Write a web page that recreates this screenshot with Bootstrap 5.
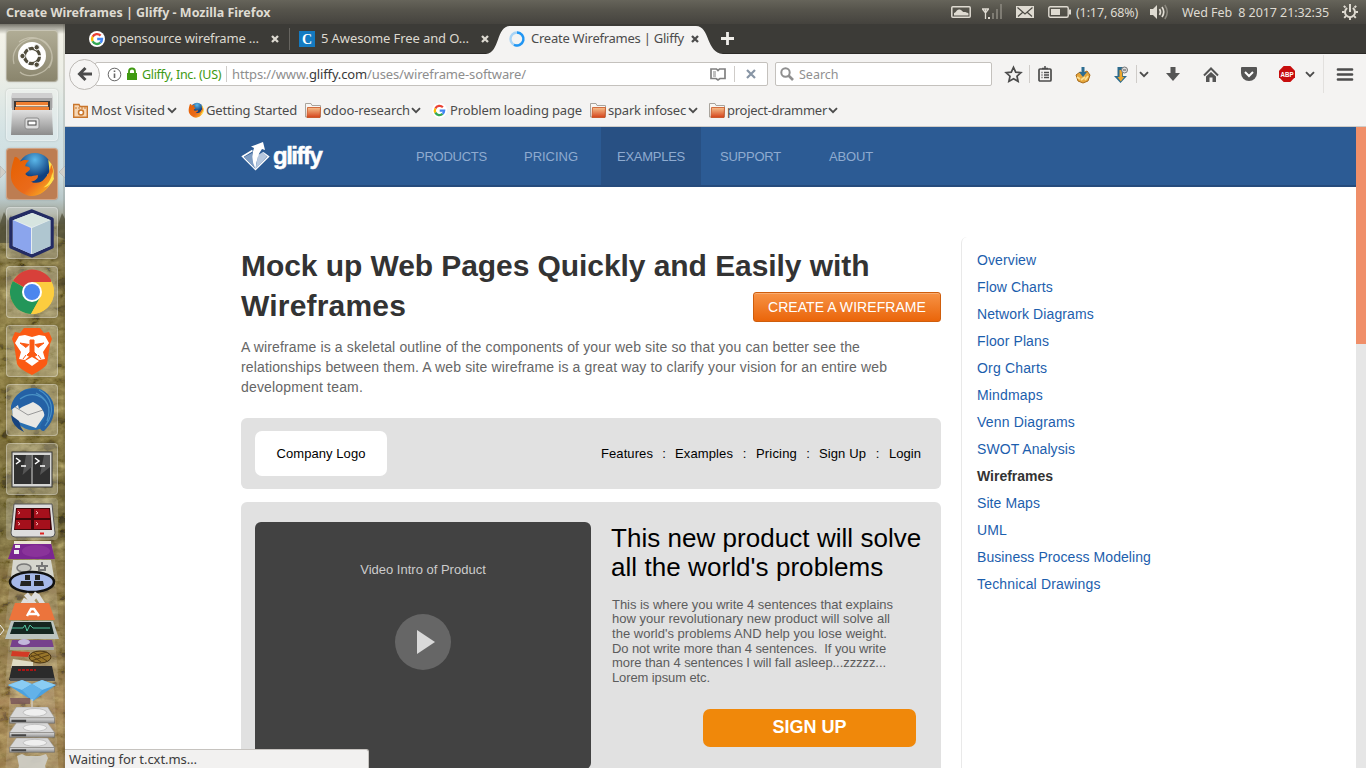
<!DOCTYPE html>
<html lang="en">
<head>
<meta charset="utf-8">
<title>Create Wireframes | Gliffy</title>
<link href="https://cdn.jsdelivr.net/npm/bootstrap@5.3.0/dist/css/bootstrap.min.css" rel="stylesheet">
<style>
html,body{height:768px;overflow:hidden}
body{font-family:"Noto Sans","Open Sans",sans-serif;font-size:13px;line-height:1.2;color:#3c3c3c;background:#fff}
svg{display:block;flex:none;overflow:visible}
.tx{white-space:pre;flex:none;display:block}
.site,.site .tx{font-family:"Liberation Sans",Arial,sans-serif}
.panel{height:24px;background:linear-gradient(#66645a,#56544c 40%,#45433e);color:#dfdbd2;flex:none}
.launcher{width:65px;background:linear-gradient(#77756c 0,#f3f2e8 10px,#eceee6 50px,#d3e2e4 110px,#cfdee0 150px,#b9c8c9 175px,#a3a79a 190px,#6d6848 203px,#77693c 240px,#8a7a40 330px,#7c6d38 400px,#6b6137 500px,#8a7344 560px,#8b7548 620px,#a58356 680px,#97794a 744px);overflow:hidden}
.tile{width:52px;height:52px;border-radius:4px;background:rgba(255,255,255,.22);box-shadow:inset 0 0 0 1px rgba(255,255,255,.3),0 0 2px rgba(0,0,0,.2);margin-bottom:7px;flex:none}
.tabs-strip{height:30px;background:#3c3b37;border-bottom:1px solid #2b2a27;color:#dcd9d0}
.tab-sep{width:1px;height:22px;background:#66645f}
.toolbar{height:40px;background:#f4f3f2}
.field{height:24px;background:#fff;border:1px solid #c4c1bd;border-radius:2px}
.field .tx{padding-top:1px}
.backbtn{width:31px;height:31px;border:1px solid #bdbab6;border-radius:50%;background:#f6f5f4;z-index:2}
.marks{height:33px;background:#f4f3f2;border-bottom:1px solid #cfccc8;color:#4c4c4c}
.marks .tx{padding-top:1px}
.vsep{width:1px;background:#cfccc9;flex:none}
.w30{width:30px}.w46{width:46px}.w13{width:13px}
.gheader{height:60px;background:#2c5b94;border-bottom:2px solid #264b7c}
.gheader .item{color:#8fabd0;font-size:13px;height:58px;padding-top:2px}
.gheader .on{background:#285083;width:100px}
.logo-word{font-weight:700;font-size:24px;color:#fff;line-height:28px;-webkit-text-stroke:.5px #fff}
.page-h{font-size:30px;font-weight:700;line-height:40px;color:#333;margin:59px 0 0}
.lede{font-size:14px;line-height:20px;color:#666;margin:11px 0 0}
.cta{width:188px;height:30px;border:1px solid #cf5e0d;border-radius:3px;background:linear-gradient(#f79346,#ea650a);box-shadow:inset 0 1px 0 rgba(255,255,255,.25);color:#fff;font-size:14px;font-weight:400;line-height:1;margin-top:6px}
.content{width:700px;margin-left:176px}
.wbox{background:#e1e1e1;border-radius:6px}
.wbox-a{height:71px;margin-top:21px;padding:13px 20px 13px 14px;font-size:13px;color:#000}
.clogo{width:132px;height:45px;background:#fff;border-radius:7px}
.wbox-b{height:290px;margin-top:12.5px;padding:20px 0 0 14px}
.video{width:336px;height:247px;background:#424242;border-radius:6px;color:#ccc;font-size:13px}
.play{width:56px;height:56px;border-radius:50%;background:#666;margin-top:37px}
.pitch{font-size:26px;line-height:29.5px;color:#000;margin-top:2px}
.pitch2{font-size:13px;line-height:14.7px;color:#5c5c5c;margin-top:15px;padding-left:1px}
.signup{width:213px;height:38px;border-radius:7px;background:#f0880a;color:#fff;font-size:18px;font-weight:700;margin:23px 0 0 92px}
.sidenav{margin:50px 0 0 20px;width:230px;height:560px;border-left:1px solid #e9e9e9;border-radius:6px 0 0 0;padding:10px 0 0 15px;font-size:14px;line-height:27px;color:#1c5ead;letter-spacing:.11px}
.sbar{width:10px;background:#e6e6e6}
.sbar div{height:217px;background:#f08f69}
.status{left:65px;top:749px;width:304px;height:19px;background:#f2f1f0;border:1px solid #c6c3bf;border-left:0;border-bottom:0;border-radius:0 3px 0 0;font-size:13px;padding-left:4px;padding-top:2px;z-index:5}
.f1,.f2,.f3,.f7,.f9{font-size:12.5px}
.f2{letter-spacing:-.13px}.f3{letter-spacing:-.08px}.f4{letter-spacing:-.157px}.f5{letter-spacing:-.103px}.f6{letter-spacing:-.25px}.f7{letter-spacing:-.33px}.f8{letter-spacing:-.129px}
.f10{letter-spacing:-.06px}.f11{letter-spacing:-.165px}.f12{letter-spacing:-.112px}.f13{letter-spacing:-.148px}.f14{letter-spacing:-.21px}.f15{letter-spacing:-.279px}
.f16{letter-spacing:-1.5px}.f17{letter-spacing:-.244px}.f18{letter-spacing:-.025px}.f19{letter-spacing:-.262px}.f20{letter-spacing:-.23px}.f21{letter-spacing:-.159px}
.f22{letter-spacing:-.07px}.f23{letter-spacing:.2px}.f24{letter-spacing:.06px}.f25,.f26{letter-spacing:.137px}.f27{letter-spacing:.172px}
.f28{letter-spacing:.069px}.f29{letter-spacing:.086px}.f30{letter-spacing:.115px}.f31{letter-spacing:.179px}.f32{letter-spacing:.107px}.f33{letter-spacing:.037px}
.f35{letter-spacing:.04px}.f36{letter-spacing:.06px}.f37{letter-spacing:-.031px}.f38{letter-spacing:.011px}.f39{letter-spacing:.018px}.f40{letter-spacing:-.1px}.f41{letter-spacing:-.068px}.f42{letter-spacing:-.106px}.f44{letter-spacing:-.055px}
.s5,.s6,.s7,.s13{letter-spacing:.17px}.s8,.s10,.s12{letter-spacing:.08px}.s9{letter-spacing:-.014px}
</style>
</head>
<body>
<svg width="0" height="0" class="position-absolute"><defs>
<linearGradient id="fo" x1="0" y1="0" x2="0" y2="1"><stop offset="0" stop-color="#f6c08c"/><stop offset="1" stop-color="#d4431a"/></linearGradient>
<linearGradient id="ffx" x1="0" y1="0" x2="1" y2="1"><stop offset="0" stop-color="#e66000"/><stop offset=".6" stop-color="#ea6a1a"/><stop offset="1" stop-color="#ffc428"/></linearGradient>
<radialGradient id="glb" cx=".5" cy=".2"><stop offset="0" stop-color="#5bb8ea"/><stop offset="1" stop-color="#10407f"/></radialGradient>
<linearGradient id="met" x1="0" y1="0" x2="0" y2="1"><stop offset="0" stop-color="#e0e0e0"/><stop offset="1" stop-color="#8c8c8c"/></linearGradient>
<symbol id="goog" viewBox="0 0 16 16"><circle cx="8" cy="8" r="8" fill="#fff"/><g fill="none" stroke-width="2.4"><path d="M11.600 4.600A5 5 0 0 0 3.600 5.800" stroke="#ea4335"/><path d="M3.600 5.800a5 5 0 0 0 0 4.500" stroke="#fbbc05"/><path d="M3.600 10.300a5 5 0 0 0 7.700 1.400" stroke="#34a853"/><path d="M11.300 11.700A5 5 0 0 0 13 8H8.200" stroke="#4285f4"/></g></symbol>
<symbol id="xx" viewBox="0 0 8 8"><path d="M1 1l6 6M7 1L1 7" stroke="currentColor" stroke-width="2.3"/></symbol>
<symbol id="chev" viewBox="0 0 10 7"><path d="M1 1.200l4 4 4-4" fill="none" stroke="#4c4c4c" stroke-width="1.900"/></symbol>
<symbol id="fold" viewBox="0 0 16 15"><path d="M.5 14V.5H6l1 2h8.500V14z" fill="#f8f6f3" stroke="#a9a49d"/><path d="M2.500 4.500h13l-.5 10H2z" fill="url(#fo)" stroke="#c8501e" stroke-width=".8"/></symbol>
<symbol id="ff" viewBox="0 0 48 48"><circle cx="27" cy="20" r="18" fill="url(#glb)"/><path d="M41 9c5 5 7 12 5 19-2 8-8 14-15 17 4-6 8-12 9-21l3 4z" fill="#ffe04a"/><path d="M6 6c3 0 5 3 6 5 3-2 6-2 9-1-3 2-4 4-4 6 3 0 5 1 5 3-1 2-4 3-5 5 3 4 7 2 13 1 1 3-2 6-7 7 4 2 10 2 14-3 4-4 6-9 7-15 3 6 3 14-1 20-4 8-11 13-19 13S2 38 2 26c0-6 1-11 4-20z" fill="url(#ffx)"/><path d="M45 22c0 6-4 13-9 16 6-1 9-5 11-9z" fill="#ffe04a"/></symbol>
<symbol id="disk" viewBox="0 0 48 22" preserveAspectRatio="none"><path d="M8 0h32l7 14H1z" fill="#d8d8d8" stroke="#999" stroke-width=".6"/><path d="M1 14h46v7H1z" fill="url(#met)" stroke="#666" stroke-width=".6"/><ellipse cx="27" cy="7" rx="12" ry="5" fill="#efefef" stroke="#aaa" stroke-width=".7"/><path d="M3 18h15" stroke="#444" stroke-width="3"/></symbol>
</defs></svg>

<div class="panel d-flex align-items-center">
 <b class="tx f1" style="margin-left:6px">Create Wireframes | Gliffy - Mozilla Firefox</b>
 <div class="d-flex align-items-center ms-auto">
  <svg width="20" height="12" viewBox="0 0 20 12" fill="none"><rect x=".8" y=".8" width="18.400" height="10.400" rx="1" stroke="#dfdbd2" stroke-width="1.500"/><path d="M3 9.500V7c2 0 2-3 5-3.500 3 0 3 2.500 5 2.500s3 .5 4.500 1.500v2z" fill="#dfdbd2"/></svg>
  <svg width="20" height="16" viewBox="0 0 20 16" style="margin-left:11px"><path d="M0 5h7M.5 5l3 4 3-4M3.500 5v10" fill="none" stroke="#dfdbd2" stroke-width="1.300"/><path d="M6 13h2v2H6z" fill="#dfdbd2"/><path d="M11 9v6M15 5v10M19 0v15" stroke="#8b887f" stroke-width="1.600"/></svg>
  <svg width="18" height="12" viewBox="0 0 18 12" style="margin-left:14px"><path d="M0 0h18v12H0z" fill="#dfdbd2"/><path d="M1.500 1.500L9 8l7.500-6.500M2 10.500l4.500-4M16 10.500l-4.500-4" fill="none" stroke="#4d4b45" stroke-width="1.200"/></svg>
  <svg width="23" height="12" viewBox="0 0 23 12" style="margin-left:14px"><rect x=".8" y=".8" width="19.400" height="10.400" rx="1.500" fill="none" stroke="#dfdbd2" stroke-width="1.400"/><path d="M3 3h9v6H3zM21 3.500h2v5h-2z" fill="#dfdbd2"/></svg>
  <span class="tx f2" style="margin-left:5px;width:62px">(1:17, 68%)</span>
  <svg width="20" height="16" viewBox="0 0 20 16" style="margin-left:11px"><path d="M1 5h3l4-4v14l-4-4H1z" fill="#dfdbd2"/><path d="M10.500 5q2 3 0 6M13 3q3.500 5 0 10" fill="none" stroke="#dfdbd2" stroke-width="1.700"/><path d="M15.800 1q5 7 0 14" fill="none" stroke="#8b887f" stroke-width="1.500"/></svg>
  <span class="tx f3" style="margin-left:13px;width:147px">Wed Feb  8 2017 21:32:35</span>
  <svg width="16" height="16" viewBox="0 0 16 16" style="margin:0 8px 0 13px" fill="none" stroke="#dfdbd2"><path d="M5.200 4a5 5 0 1 0 5.600 0" stroke-width="2"/><path d="M8 0v8" stroke-width="2"/><path d="M3.500 3.500L1.800 1.800M12.500 3.500l1.700-1.700M2.500 8H0M13.500 8H16M4 12l-1.800 1.800M12 12l1.800 1.800M8 13.500V16" stroke-width="1.900"/></svg>
 </div>
</div>

<div class="d-flex" style="height:744px">
 <div class="launcher position-relative flex-shrink-0">
  <svg width="65" height="744" class="position-absolute top-0 start-0"><filter id="n" x="0" y="0" width="1" height="1"><feTurbulence type="fractalNoise" baseFrequency=".07 .11" numOctaves="5" seed="9"/><feColorMatrix values="1.700 0 0 0 -.5  1.500 0 0 0 -.45  .7 0 0 0 -.25  0 1.500 0 0 -.25"/></filter><rect y="200" width="65" height="544" filter="url(#n)" opacity=".5"/><path d="M0 200l4-12 4 9 3-6 4 14v14H0zM56 212l3-14 3-9 3 6v20z" fill="#4c4a35" opacity=".7"/><path d="M64 0v744" stroke="#4a473d" opacity=".3"/><path d="M0 142l6 6-6 6zM65 142l-6 6 6 6z" fill="#d0cfc9" stroke="#aaa" stroke-width=".5"/><path d="M0 601l4 5-4 5" fill="none" stroke="#eee"/></svg>
  <div class="position-relative d-flex flex-column" style="padding:6px 0 0 6px">
   <div class="tile" style="background:linear-gradient(#b1ad96,#89846c)"><svg width="52" height="52" viewBox="0 0 52 52"><path d="M8 34C2 12 34-2 44 18M44 18c10 22-20 34-30 24M13 12c18-14 42 8 30 26" fill="none" stroke="#d0ccb9" stroke-width="1.200" opacity=".7"/><circle cx="26" cy="26" r="14" fill="#fff"/><circle cx="26" cy="26" r="7.500" fill="none" stroke="#504c3c" stroke-width="3.300"/><path d="M26 26l-5.500 10M26 26l11.500 0M26 26L20.500 16" stroke="#fff" stroke-width="1.300"/><circle cx="26" cy="26" r="5.800" fill="#fff"/><g fill="#504c3c" stroke="#fff" stroke-width="1"><circle cx="16.500" cy="26" r="2.700"/><circle cx="30.700" cy="17.300" r="2.700"/><circle cx="30.700" cy="34.700" r="2.700"/></g></svg></div>
   <div class="tile"><svg width="52" height="52" viewBox="0 0 52 52"><path d="M6 4h40l1 5v10H5V9z" fill="#d0d0d0"/><path d="M6 9h40v13H6z" fill="#a4a4a4"/><path d="M8 12h36v10H8z" fill="#3c3734"/><path d="M10 13h32v3H10zM9 18h34v3H9z" fill="#ee7f31"/><path d="M10 16h32v1.500H10z" fill="#ffe2c0"/><path d="M6 21h40l1 25H5z" fill="url(#met)"/><rect x="19" y="29" width="14" height="11" rx="2" fill="#ddd" stroke="#8a8a8a"/><rect x="22" y="32" width="8" height="4" fill="#fff" stroke="#444"/></svg></div>
   <div class="tile" style="background:#bd7d52"><svg width="46" height="46" style="margin:3px"><use href="#ff"/></svg></div>
   <div class="tile"><svg width="52" height="52" viewBox="0 0 52 52"><path d="M26 4l20 8v28L26 49 5 40V12z" fill="#e6edf0" stroke="#232b63" stroke-width="3.500" stroke-linejoin="round"/><path d="M7 13l18 8v26L7 39z" fill="#8ba5ed"/><path d="M44.500 13L26 21v26l18.500-8z" fill="#afc6d0"/><path d="M26 6l18 7-18 7-18-7z" fill="#d7e5e0"/></svg></div>
   <div class="tile"><svg width="52" height="52" viewBox="0 0 52 52"><circle cx="26" cy="26" r="22" fill="#fccd3f"/><path d="M26 26L7 15a22 22 0 0 1 38-1v2H26z" fill="#d8403a"/><path d="M6.900 15A22 22 0 0 0 25 48l9-16-8-6z" fill="#239659"/><path d="M25 48a22 22 0 0 0 20.500-32H28l7 14z" fill="#fccd3f"/><circle cx="26" cy="26" r="10" fill="#fff"/><circle cx="26" cy="26" r="8" fill="#4b86ee"/></svg></div>
   <div class="tile"><svg width="52" height="52" viewBox="0 0 52 52"><path d="M18 3h16l4 5 5-1 3 7-2 5-3 20q-2 4-15 11Q13 44 11 39L8 19l-2-5 3-7 5 1z" fill="#fb5a14"/><path d="M19 10l7 2 7-2 6 1 4 7-6 9 2 7-6 1-7-6-7 6-6-1 2-7-6-9 4-7z" fill="#fff"/><path d="M24 15h4l0 12 3 3-5 3-5-3 3-3zM14 18l9 1.500-3 3zM38 18l-9 1.500 3 3zM17 34l3-4M35 34l-3-4" fill="#fb5a14" stroke="#fb5a14"/><path d="M19 36l7-4 7 4-7 5z" fill="#fff"/></svg></div>
   <div class="tile"><svg width="52" height="52" viewBox="0 0 52 52"><circle cx="27" cy="25" r="21" fill="#286fb1"/><path d="M6 22l25-7 12 10-13 19-23-8z" fill="#e9e8e4"/><path d="M9 23l13 8 18-6" fill="none" stroke="#999"/><path d="M5 22C8 10 18 4 29 5c20 2 26 27 9 42-6 0-4-7 0-11 2-7-2-14-11-18-6 3-10 4-14 7l-1-4-7 5z" fill="#2461a5"/><path d="M14 15c13-9 25-3 29 9M30 9c11 5 16 15 11 28M33 6c12 6 18 21 6 36" fill="none" stroke="#4a92c5" stroke-width="1.200"/><path d="M5 31q1 12 13 17-4-5-5-11z" fill="#18447f"/></svg></div>
   <div class="tile"><svg width="52" height="52" viewBox="0 0 52 52"><rect x="6" y="9" width="40" height="35" fill="#d6d6d4" stroke="#333"/><path d="M8 12h17.500v29H8zM26.500 12H44v29H26.500z" fill="#303030"/><path d="M20 12h5.500v12l-9 8zM38 12h6v12l-10 8z" fill="#555"/><path d="M10 15l4 3-4 3M15 23h5M29 15l4 3-4 3M34 23h5" fill="none" stroke="#fff" stroke-width="1.500"/></svg></div>
   <svg width="52" height="270" viewBox="6 500 52 270">
    <rect x="6" y="496" width="52" height="42" rx="4" fill="#fff" opacity=".22"/><path d="M14 539h38l6 40H6zM10 580h46l3 45H5zM10 625h44l5 60H5zM10 685h44l5 90H5z" fill="#fff" opacity=".13"/>
    <path d="M14 502h38l3 29q0 4-4 4H15q-4 0-4-4z" fill="#ddd" stroke="#555"/><path d="M16 506h34l2 22H14z" fill="#410509"/><path d="M17 507h14v9H16zM34 507h15l1 9H34zM16 518h15v9H15zM34 518h16v9H34z" fill="#a5101c"/><path d="M18 509l2 2-2 1M36 509l2 2-2 1M18 520l2 2-2 1M36 520l2 2-2 1" stroke="#eaa" fill="none"/><path d="M40 531.500h4" stroke="#d22" stroke-width="2"/>
    <path d="M14 541h37l4 16H8z" fill="#7b2691"/><path d="M14 539h37v3H14z" fill="#e9e3d0"/><path d="M15 543h5v3h-5zM14 548h5v4h-5z" fill="#eee"/><ellipse cx="36" cy="549" rx="14" ry="6" fill="#a64cac" opacity=".35"/>
    <path d="M13 558h38l3 17H11z" fill="#d6d6ce"/><ellipse cx="24" cy="566" rx="7" ry="4" fill="#c4c4bf" stroke="#777" stroke-width="1.500"/><path d="M36 564h12M39 564v4h6v-4M42 560v4" fill="none" stroke="#777" stroke-width="2"/>
    <ellipse cx="32" cy="580" rx="22" ry="10" fill="#a6b8e8" stroke="#111" stroke-width="2.500"/><path d="M21 579h10v5H20zM34 579h9l1 5H34zM25 573h5v5h-5zM35 573h5v5h-5z" fill="#222"/>
    <path d="M26 592l9 11M37 591l-9 12M37 593l7 11M26 597l-4 7" stroke="#dedede" stroke-width="5" fill="none"/>
    <path d="M15 601h34l6 17H9z" fill="#ec743c"/><path d="M27 614l4-7h3l5 7M29 612h8" stroke="#fff" stroke-width="2.500" fill="none"/>
    <path d="M11 619h42l6 18H5z" fill="#bcc4bf"/><path d="M14 620h37l3 12H10z" fill="#152620"/><path d="M12 626h11l2-3 2 6 3-6 3 3h17" stroke="#53c5a0" fill="none"/>
    <path d="M12 638h40l2 8H10z" fill="#76418c"/><ellipse cx="24" cy="640" rx="6" ry="3" fill="#c2b7dc"/><path d="M10 645h44v3H10z" fill="#a7a79e"/>
    <path d="M12 649l18 1-2 5-17-1z" fill="#d23a25"/><path d="M13 657l20 3v6H11z" fill="#dedbc5"/><ellipse cx="40" cy="655" rx="11" ry="6" fill="#98752a" stroke="#453111"/><path d="M30 655l17-5M31 659l18-6M33 650l14 9M31 653l10 7" stroke="#5c4216"/>
    <path d="M12 664h40l3 14H9z" fill="#2b2b2b"/><path d="M18 668h18" stroke="#a61515" stroke-width="2" stroke-dasharray="3 1"/><path d="M10 676h45v3H10z" fill="#555"/>
    <path d="M8 683l14-5 10 4 10-4 14 5-23 16z" fill="#4ba1e0"/><path d="M22 678l10 4-10 6-14-5zM42 678l-10 4 10 6 14-5z" fill="#8accf3"/><path d="M32 682l10 6-9 11-11-11z" fill="#63b2e8"/><path d="M10 696h20v6H11z" fill="#6e4854" opacity=".7"/>
    <path d="M32 697v16" stroke="#ddd"/>
    <use href="#disk" x="8.500" y="705" width="47" height="17"/><use href="#disk" x="8.500" y="721" width="47" height="15"/><use href="#disk" x="8.500" y="736" width="47" height="15"/>
    <path d="M17 754l5-2 4 2h14l6-2 2 4-3 8 2 6H17l2-6z" fill="#cfcfc9" opacity=".9"/>
   </svg>
  </div>
 </div>

 <div class="d-flex flex-column flex-grow-1" style="min-width:0">
  <div class="tabs-strip d-flex align-items-center position-relative">
   <svg class="position-absolute top-0" style="left:420px" width="240" height="30" viewBox="485 24 240 30"><path d="M486 54c14-1 10-28 24-28h186c14 0 10 27 27 28z" fill="#f4f3f2"/></svg>
   <div class="d-flex align-items-center" style="padding-left:24px;width:224px"><svg width="16" height="16"><use href="#goog"/></svg><div style="margin-left:6px;width:160px"><span class="tx f4">opensource wireframe …</span></div><svg width="8" height="8"><use href="#xx"/></svg></div>
   <div class="tab-sep"></div>
   <div class="d-flex align-items-center" style="padding-left:9px;width:200px"><svg width="16" height="16" viewBox="0 0 16 16"><path fill="#147ac1" d="M0 0h16v16H0z"/><text x="3" y="13" font-family="Liberation Serif" font-weight="700" font-size="14" fill="#fff">C</text></svg><div style="margin-left:6px;width:160px"><span class="tx f5">5 Awesome Free and O…</span></div><svg width="8" height="8"><use href="#xx"/></svg></div>
   <div class="d-flex align-items-center position-relative" style="padding-left:19px;width:231px;color:#4c4c4c"><svg width="16" height="16" viewBox="0 0 16 16" fill="none" stroke-width="2.400"><circle cx="8" cy="8" r="6.500" stroke="#a9d4f6"/><path d="M8 1.500a6.500 6.500 0 1 1-3 12.300" stroke="#2196f3"/></svg><div style="margin-left:6px;width:160px"><span class="tx f6">Create Wireframes | Gliffy</span></div><svg width="8" height="8"><use href="#xx"/></svg></div>
   <svg width="13" height="13" viewBox="0 0 13 13"><path d="M6.500 0v13M0 6.500h13" stroke="#f0eeea" stroke-width="2.800"/></svg>
  </div>
  <div class="toolbar d-flex align-items-center">
   <div class="backbtn d-flex align-items-center justify-content-center flex-shrink-0" style="margin-left:4px"><svg width="14" height="14" viewBox="0 0 14 14"><path d="M7.500 1L1.500 7l6 6M2 7h12" fill="none" stroke="#4c4c4c" stroke-width="3"/></svg></div>
   <div class="field d-flex align-items-center flex-shrink-0" style="margin-left:-5px;width:673px;padding-left:11px">
    <svg width="15" height="15" viewBox="0 0 15 15"><circle cx="7.500" cy="7.500" r="6.300" fill="none" stroke="#666"/><path d="M7.500 6.500V11M7.500 3.500V5" stroke="#666" stroke-width="1.600"/></svg>
    <svg width="10" height="12" viewBox="0 0 10 12" style="margin-left:5px"><path d="M0 5h10v7H0z" fill="#409a12"/><path d="M2 6V3.500a3 3 0 0 1 6 0V6" fill="none" stroke="#409a12" stroke-width="1.800"/></svg>
    <span class="tx f7" style="margin-left:5px;width:79px;color:#409a12">Gliffy, Inc. (US)</span>
    <div class="vsep" style="height:16px;margin:0 5px"></div>
    <span class="tx f8" style="color:#8e8e8e">https://www.<span style="color:#3a3a3a">gliffy.com</span>/uses/wireframe-software/</span>
    <div class="d-flex align-items-center ms-auto" style="padding-right:11px">
     <svg width="16" height="13" viewBox="0 0 16 13"><path d="M1 1h5.500L8 2.500 9.500 1H15v9.500h-5L8 12l-2-1.500H1z" fill="none" stroke="#808080" stroke-width="1.700"/><path d="M3 4h3M3 6h3M3 8h3" stroke="#808080"/></svg>
     <div class="vsep" style="height:16px;margin:0 11px 0 8px"></div>
     <svg width="10" height="10" viewBox="0 0 10 10"><path d="M1 1l8 8M9 1L1 9" stroke="#8795a5" stroke-width="2.200"/></svg>
    </div>
   </div>
   <div class="field d-flex align-items-center flex-shrink-0" style="margin-left:7px;width:217px;padding-left:4px"><svg width="14" height="14" viewBox="0 0 14 14" fill="none" stroke="#8f8f8f"><circle cx="5.500" cy="5.500" r="4.200" stroke-width="2"/><path d="M8.500 8.500l4.500 4.500" stroke-width="2.600"/></svg><span class="tx f9" style="margin-left:5px;color:#909090">Search</span></div>
   <div class="d-flex align-items-center" style="margin-left:6px">
    <div class="d-flex justify-content-center" style="width:31px"><svg width="17" height="17" viewBox="0 0 17 17"><path d="M8.500 1.300l2.200 4.800 5.200.5-3.900 3.600 1.100 5.200-4.600-2.700-4.600 2.700L5 10.200 1.100 6.600l5.200-.5z" fill="none" stroke="#4c4c4c" stroke-width="1.700"/></svg></div>
    <div class="vsep" style="height:18px"></div>
    <div class="w30 d-flex justify-content-center"><svg width="14" height="16" viewBox="0 0 14 16" fill="none" stroke="#4c4c4c"><rect x="1" y="3" width="12" height="12" rx="1" stroke-width="1.700"/><path d="M4 2.500h6M7 0v3M3.500 6.500h1M6 6.500h5M3.500 9h1M6 9h5M3.500 11.500h1M6 11.500h5" stroke-width="1.500"/></svg></div>
    <div class="w46 d-flex justify-content-center"><svg width="16" height="17" viewBox="0 0 16 17"><path d="M1 9l4-3 3 1 4-2 3 4-2 6-5 2-5-2z" fill="#e7a63a" stroke="#a56a1c"/><path d="M6.500 1h3v5H12l-4 5-4-5h2.500z" fill="#2d6d91"/><path d="M2 11l3 2M6 14l4-3M10 14l3-4" stroke="#fbdf94" stroke-width="1.800"/></svg></div>
    <div class="w30 d-flex justify-content-center"><svg width="14" height="17" viewBox="0 0 14 17"><path d="M3.500 1H9v9h4l-6.500 7L0 10h3.500z" fill="#2c6b8d"/><path d="M5.500 4h2.800v7h2l-3.500 4.500L3.500 11h2z" fill="#eda62c"/><circle cx="10.500" cy="4" r="3" fill="#ddd" stroke="#777"/><path d="M9 4h3" stroke="#555"/></svg></div>
    <div class="vsep" style="height:18px"></div>
    <div class="w13 d-flex justify-content-center"><svg width="10" height="7"><use href="#chev"/></svg></div>
    <div class="w46 d-flex justify-content-center"><svg width="14" height="14" viewBox="0 0 14 14"><path d="M4.500 0h5v6H14l-7 8-7-8h4.500z" fill="#555"/></svg></div>
    <div class="w30 d-flex justify-content-center"><svg width="16" height="15" viewBox="0 0 16 15"><path d="M1 8.500l7-7 7 7" fill="none" stroke="#555" stroke-width="2"/><path d="M3 9.500L8 5l5 4.500V15H9.500v-4.500h-3V15H3z" fill="#555"/></svg></div>
    <div class="w46 d-flex justify-content-center"><svg width="16" height="14" viewBox="0 0 16 14"><path d="M1 0h14q1 0 1 1v5a8 8 0 0 1-16 0V1q0-1 1-1z" fill="#555"/><path d="M4 5l4 4 4-4" fill="none" stroke="#fff" stroke-width="2"/></svg></div>
    <div class="w30 d-flex justify-content-center"><svg width="16" height="16" viewBox="0 0 16 16"><path d="M4.700 0h6.600L16 4.700v6.600L11.300 16H4.700L0 11.300V4.700z" fill="#c70d0d"/><text x="1.500" y="10.800" font-family="Liberation Sans" font-weight="700" font-size="7.500" textLength="13" lengthAdjust="spacingAndGlyphs" fill="#fff">ABP</text></svg></div>
    <div class="d-flex justify-content-center" style="width:16px"><svg width="10" height="7"><use href="#chev"/></svg></div>
    <div class="vsep" style="height:38px;margin-left:5px;background:#e2e0de"></div>
    <div class="d-flex justify-content-center" style="width:42px"><svg width="16" height="13" viewBox="0 0 16 13"><path d="M1 1.500h14M1 6.500h14M1 11.500h14" stroke="#4c4c4c" stroke-width="2.700" stroke-linecap="round"/></svg></div>
   </div>
  </div>
  <div class="marks d-flex align-items-center" style="padding-left:8px">
   <svg width="15" height="15" viewBox="0 0 15 15"><path d="M.7 14.300V1.500H6l1 2h7.300v10.800z" fill="#f7d7b5" stroke="#c9762c" stroke-width="1.400"/><path d="M2 5h11" stroke="#c9762c" stroke-dasharray="2 1"/><circle cx="8" cy="9.500" r="2.500" fill="#fff" stroke="#c9762c" stroke-width="1.500"/></svg>
   <span class="tx f10" style="margin-left:3px;width:74px">Most Visited</span><svg width="10" height="7" style="margin-left:2px"><use href="#chev"/></svg>
   <svg width="16" height="16" style="margin-left:11px"><use href="#ff"/></svg><span class="tx f11" style="margin-left:2px;width:91px">Getting Started</span>
   <svg width="16" height="15" style="margin-left:8px"><use href="#fold"/></svg><span class="tx f12" style="margin-left:2px;width:87px">odoo-research</span><svg width="10" height="7" style="margin-left:1px"><use href="#chev"/></svg>
   <svg width="15" height="15" style="margin-left:11px"><use href="#goog"/></svg><span class="tx f13" style="margin-left:3px;width:132px">Problem loading page</span>
   <svg width="16" height="15" style="margin-left:8px"><use href="#fold"/></svg><span class="tx f14" style="margin-left:2px;width:78px">spark infosec</span><svg width="10" height="7" style="margin-left:2px"><use href="#chev"/></svg>
   <svg width="16" height="15" style="margin-left:11px"><use href="#fold"/></svg><span class="tx f15" style="margin-left:2px;width:100px">project-drammer</span><svg width="10" height="7" style="margin-left:1px"><use href="#chev"/></svg>
  </div>

  <div class="site d-flex flex-grow-1 overflow-hidden" style="height:641px">
   <div class="flex-grow-1">
    <header class="gheader d-flex align-items-center">
     <svg width="29" height="29" viewBox="0 0 29 29" style="margin-left:176px"><path d="M11.500 8.500L1.500 14.500 14.500 27.500 27.500 14.500 22 10.500" fill="none" stroke="#fff" stroke-width="1.500"/><path d="M14.500 27L3 15l8-4z" fill="#7c9bc2"/><path d="M14.500 27L17 13l5-3 4 4.500z" fill="#b6c8df"/><path d="M14.500 27Q9 16 13 6l-3-1.500L22 0l2 8-3-1q-5 6-6.500 20z" fill="#fff"/></svg>
     <div style="margin-left:3px;width:143px"><span class="tx logo-word f16">gliffy</span></div>
     <div class="item d-flex align-items-center" style="width:108px"><span class="tx f17">PRODUCTS</span></div>
     <div class="item d-flex align-items-center" style="width:77px"><span class="tx f18">PRICING</span></div>
     <div class="item on d-flex align-items-center justify-content-center"><span class="tx f19">EXAMPLES</span></div>
     <div class="item d-flex align-items-center" style="margin-left:19px;width:109px"><span class="tx f20">SUPPORT</span></div>
     <div class="item d-flex align-items-center"><span class="tx f21">ABOUT</span></div>
    </header>
    <div class="d-flex">
     <main class="content">
      <h1 class="page-h"><span class="tx f22">Mock up Web Pages Quickly and Easily with</span><span class="d-flex justify-content-between"><span class="tx f23">Wireframes</span><a class="cta d-flex align-items-center justify-content-center text-decoration-none"><span class="tx f24">CREATE A WIREFRAME</span></a></span></h1>
      <p class="lede"><span class="tx f25">A wireframe is a skeletal outline of the components of your web site so that you can better see the</span><span class="tx f26">relationships between them. A web site wireframe is a great way to clarify your vision for an entire web</span><span class="tx f27">development team.</span></p>
      <div class="wbox wbox-a d-flex align-items-center justify-content-between">
       <div class="clogo d-flex align-items-center justify-content-center"><span class="tx f28">Company Logo</span></div>
       <div class="d-flex"><span class="tx f29">Features</span><span style="width:22px" class="text-center">:</span><span class="tx f30">Examples</span><span style="width:23px" class="text-center">:</span><span class="tx f31">Pricing</span><span style="width:22px" class="text-center">:</span><span class="tx f32">Sign Up</span><span style="width:23px" class="text-center">:</span><span class="tx f33">Login</span></div>
      </div>
      <div class="wbox wbox-b d-flex">
       <div class="video d-flex flex-column align-items-center flex-shrink-0"><span class="tx" style="margin-top:40px">Video Intro of Product</span><div class="play d-flex align-items-center"><svg width="18" height="24" viewBox="0 0 18 24" style="margin-left:22px"><path d="M0 0v24l18-12z" fill="#d9d9d9"/></svg></div></div>
       <div style="margin-left:20px">
        <div class="pitch"><span class="tx f35">This new product will solve</span><span class="tx f36">all the world's problems</span></div>
        <div class="pitch2"><span class="tx f37">This is where you write 4 sentences that explains</span><span class="tx f38">how your revolutionary new product will solve all</span><span class="tx f39">the world's problems AND help you lose weight.</span><span class="tx f40">Do not write more than 4 sentences.  If you write</span><span class="tx f41">more than 4 sentences I will fall asleep...zzzzz...</span><span class="tx f42">Lorem ipsum etc.</span></div>
        <div class="signup d-flex align-items-center justify-content-center"><span class="tx">SIGN UP</span></div>
       </div>
      </div>
     </main>
     <nav class="sidenav d-flex flex-column align-items-start"><span class="tx">Overview</span><span class="tx">Flow Charts</span><span class="tx">Network Diagrams</span><span class="tx">Floor Plans</span><span class="tx s5">Org Charts</span><span class="tx s6">Mindmaps</span><span class="tx s7">Venn Diagrams</span><span class="tx s8">SWOT Analysis</span><b class="tx s9" style="color:#333">Wireframes</b><span class="tx s10">Site Maps</span><span class="tx">UML</span><span class="tx s12">Business Process Modeling</span><span class="tx s13">Technical Drawings</span></nav>
    </div>
   </div>
   <div class="sbar flex-shrink-0"><div></div></div>
  </div>
 </div>
</div>
<div class="status position-absolute d-flex align-items-center"><span class="tx f44">Waiting for t.cxt.ms…</span></div>
<script src="https://cdn.jsdelivr.net/npm/bootstrap@5.3.0/dist/js/bootstrap.bundle.min.js"></script>
</body>
</html>
